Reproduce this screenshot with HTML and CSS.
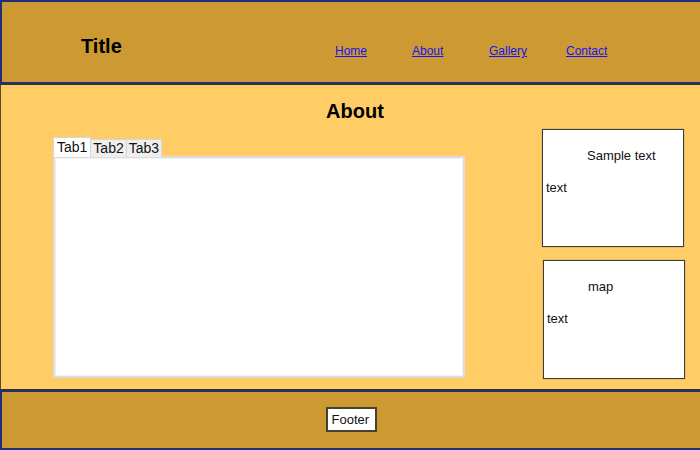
FILE: index.html
```html
<!DOCTYPE html>
<html>
<head>
<meta charset="utf-8">
<link rel="stylesheet" href="styles.css">
</head>
<body>
<header class="header">
  <div class="brand">Title</div>
  <nav class="nav">
    <a href="#" class="nav-link">Home</a>
    <a href="#" class="nav-link">About</a>
    <a href="#" class="nav-link">Gallery</a>
    <a href="#" class="nav-link">Contact</a>
  </nav>
</header>
<main class="main">
  <h1 class="page-title">About</h1>
  <div class="content">
    <section class="tabs">
      <div class="tab-bar">
        <span class="tab tab-active">Tab1</span>
        <span class="tab">Tab2</span>
        <span class="tab">Tab3</span>
      </div>
      <div class="tab-panel"></div>
    </section>
    <aside class="aside">
      <div class="card">
        <p class="card-title">Sample text</p>
        <p class="card-text">text</p>
      </div>
      <div class="card card-second">
        <p class="card-title">map</p>
        <p class="card-text">text</p>
      </div>
    </aside>
  </div>
</main>
<footer class="footer">
  <div class="footer-box">Footer</div>
</footer>
</body>
</html>
```
FILE: styles.css
```css
html, body {
  margin: 0;
  padding: 0;
  width: 700px;
  height: 450px;
  overflow: hidden;
  font-family: "Liberation Sans", Arial, sans-serif;
}

.header {
  box-sizing: border-box;
  height: 84px;
  background: #cc9933;
  border: 2px solid #1f2f78;
  border-right: none;
  display: flex;
  align-items: center;
}

.brand {
  font-weight: bold;
  font-size: 20px;
  margin-left: 79px;
  margin-top: 8px;
  width: 254px;
}

.nav {
  display: flex;
  margin-top: 18px;
}

.nav-link {
  width: 77px;
  font-size: 12px;
  color: #1515f0;
  text-decoration: underline;
}

.main {
  box-sizing: border-box;
  height: 306px;
  background: #ffcc66;
  border-top: 1px solid #3a3020;
  border-bottom: 1px solid #3a3020;
  border-left: 1px solid #5a4a20;
  padding: 14px 15px 0 52px;
}

.page-title {
  margin: 0 28px 0 0;
  font-size: 20px;
  line-height: 24px;
  text-align: center;
}

.content {
  display: grid;
  grid-template-columns: 412px 143px;
  column-gap: 77px;
  margin-top: 6px;
  align-items: start;
}

.tabs {
  margin-top: 8px;
}

.tab-bar {
  display: flex;
  align-items: flex-end;
  height: 20px;
  position: relative;
  z-index: 1;
}

.tab {
  box-sizing: border-box;
  height: 18px;
  line-height: 17px;
  font-size: 14px;
  padding: 0 2px;
  margin-left: -1px;
  background: #eeeeee;
  border: 1px solid #d6d6d6;
  border-bottom: none;
  color: #111;
}

.tab-active {
  height: 20px;
  line-height: 18px;
  margin-left: 0;
  background: #ffffff;
  padding: 0 3px;
  position: relative;
  z-index: 1;
}

.tab-panel {
  box-sizing: border-box;
  height: 222px;
  margin-top: -1px;
  background: #ffffff;
  border: 2px solid #dcdcdc;
  box-shadow: inset 0 0 0 1px #f2f2f2;
}

.aside {
  display: flex;
  flex-direction: column;
  gap: 13px;
}

.card {
  box-sizing: border-box;
  height: 118px;
  width: 142px;
  background: #ffffff;
  border: 1.5px solid #3c3c3c;
  box-shadow: 0 0 1px #8a7a50;
  font-size: 13px;
  color: #111;
}

.card-second {
  height: 119px;
  margin-left: 1px;
}

.card-title {
  margin: 18px 0 0 44px;
  line-height: 16px;
}

.card-text {
  margin: 16px 0 0 3px;
  line-height: 16px;
}

.footer {
  box-sizing: border-box;
  height: 60px;
  background: #cc9933;
  border: 2px solid #1f2f78;
  border-right: none;
  display: flex;
  justify-content: center;
  align-items: flex-start;
  padding-top: 15px;
}

.footer-box {
  box-sizing: border-box;
  height: 25px;
  width: 51px;
  background: #ffffff;
  border: 2px solid #4a4030;
  font-size: 13px;
  line-height: 21px;
  padding-left: 4px;
  color: #111;
}
```
